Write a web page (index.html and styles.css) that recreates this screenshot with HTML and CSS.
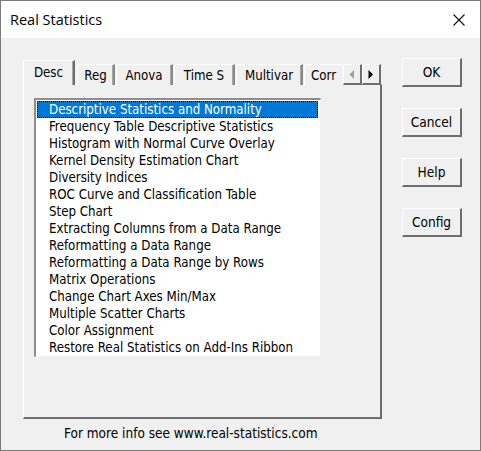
FILE: index.html
```html
<!DOCTYPE html>
<html>
<head>
<meta charset="utf-8">
<link rel="stylesheet" href="styles.css">
</head>
<body>
<div class="window">
  <div class="titlebar">
    <span class="title">Real Statistics</span>
    <svg class="close" width="12" height="12" viewBox="0 0 12 12"><path d="M0.5 0.5 L11.5 11.5 M11.5 0.5 L0.5 11.5" stroke="#111" stroke-width="1.1" fill="none"/></svg>
  </div>
  <div class="content">
    <div class="main">
      <div class="tabctl">
        <div class="tabstrip">
          <div class="tab active w-desc">Desc</div>
          <div class="tab w-reg">Reg</div>
          <div class="tab w-anova">Anova</div>
          <div class="tab w-time">Time S</div>
          <div class="tab w-multi">Multivar</div>
          <div class="tab w-corr">Corr</div>
          <div class="scroller">
            <div class="sbtn"><svg width="6" height="9" viewBox="0 0 6 9"><path d="M5 0 L5 9 L0.5 4.5 Z" fill="#a0a0a0"/></svg></div>
            <div class="sbtn"><svg width="6" height="9" viewBox="0 0 6 9"><path d="M0.5 0 L0.5 9 L5 4.5 Z" fill="#000"/></svg></div>
          </div>
        </div>
        <div class="panel">
          <div class="listbox">
            <div class="item sel">Descriptive Statistics and Normality</div>
            <div class="item">Frequency Table Descriptive Statistics</div>
            <div class="item">Histogram with Normal Curve Overlay</div>
            <div class="item">Kernel Density Estimation Chart</div>
            <div class="item">Diversity Indices</div>
            <div class="item">ROC Curve and Classification Table</div>
            <div class="item">Step Chart</div>
            <div class="item">Extracting Columns from a Data Range</div>
            <div class="item">Reformatting a Data Range</div>
            <div class="item">Reformatting a Data Range by Rows</div>
            <div class="item">Matrix Operations</div>
            <div class="item">Change Chart Axes Min/Max</div>
            <div class="item">Multiple Scatter Charts</div>
            <div class="item">Color Assignment</div>
            <div class="item">Restore Real Statistics on Add-Ins Ribbon</div>
          </div>
        </div>
      </div>
      <div class="buttons">
        <div class="btn">OK</div>
        <div class="btn">Cancel</div>
        <div class="btn">Help</div>
        <div class="btn">Config</div>
      </div>
    </div>
    <div class="footer">For more info see www.real-statistics.com</div>
  </div>
</div>
</body>
</html>
```
FILE: styles.css
```css
* { box-sizing: border-box; }
body { margin: 0; background: #f0f0f0; }
.window {
  width: 481px; height: 451px;
  border: 1px solid #7a7a7a;
  background: #f0f0f0;
  font-family: "DejaVu Sans", sans-serif;
  font-stretch: condensed;
  font-size: 13.2px;
  color: #000;
  display: flex; flex-direction: column;
}
.titlebar {
  height: 37px; background: #fff;
  display: flex; align-items: center; justify-content: space-between;
  padding: 0 15px 0 9px;
}
.title { font-family: "Open Sans", "Noto Sans", sans-serif; font-stretch: normal; font-size: 14.5px; color: #000; }
.close { display: block; margin-top: 1px; }
.content { flex: 1; display: flex; flex-direction: column; }
.main { display: flex; padding: 22px 0 0 22px; }
.tabctl { width: 359px; display: flex; flex-direction: column; }
.tabstrip { height: 25px; display: flex; align-items: flex-end; position: relative; overflow: hidden; margin-bottom: -1px; z-index: 1; }
.tab {
  flex: none;
  height: 21px; margin-right: 1px;
  border-top: 1px solid #fff; border-left: 1px solid #fff;
  border-right: 2px solid #8a8a8a;
  box-shadow: inset -1px 0 0 #a8a8a8;
  display: flex; align-items: center; justify-content: center; white-space: nowrap;
  background: #f0f0f0;
}
.tab.active { height: 25px; padding-bottom: 2px; border-right-color: #6e6e6e; margin-right: 2px; }
.w-desc { width: 52px; }
.w-reg { width: 38px; }
.w-anova { width: 57px; }
.w-time { width: 61px; }
.w-multi { width: 67px; }
.w-corr { width: 56px; justify-content: flex-start; padding-left: 6px; }
.scroller { position: absolute; right: 1px; top: 4px; display: flex; }
.sbtn {
  width: 19px; height: 21px; background: #f0f0f0;
  border-top: 1px solid #fff; border-left: 1px solid #fff;
  border-right: 2px solid #6e6e6e; border-bottom: 2px solid #6e6e6e;
  display: flex; align-items: center; justify-content: center;
}
.panel {
  height: 335px;
  border-top: 1px solid #fff; border-left: 1px solid #fff;
  border-right: 2px solid #6e6e6e; border-bottom: 2px solid #6e6e6e;
  padding: 13px 0 0 10px;
}
.listbox {
  width: 287px; height: 259px; background: #fff;
  border-top: 2px solid #8e8e8e; border-left: 2px solid #8e8e8e;
  border-right: 1px solid #f0f0f0; border-bottom: 1px solid #f0f0f0;
  padding: 1px 2px 0 1px;
}
.item { height: 17px; line-height: 17.6px; padding-left: 12px; white-space: nowrap; }
.item.sel { background: #0078d7; color: #fff; outline: 1px dotted #000; outline-offset: -1px; }
.buttons { display: flex; flex-direction: column; gap: 21px; margin-left: 20px; margin-top: -2px; font-size: 13.6px; }
.btn {
  width: 60px; height: 29px; background: #f0f0f0;
  border-top: 1px solid #fff; border-left: 1px solid #fff;
  border-right: 2px solid #6e6e6e; border-bottom: 2px solid #6e6e6e;
  display: flex; align-items: center; justify-content: center;
}
.footer { padding: 6px 0 0 63px; font-size: 13.5px; }
```
